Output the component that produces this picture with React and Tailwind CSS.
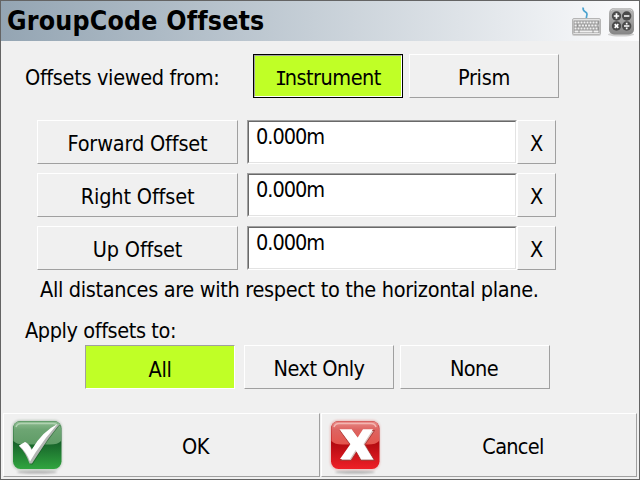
const FONT =
  "font-['DejaVu_Sans_Condensed','DejaVu_Sans',sans-serif] [font-stretch:condensed]";

const offsets = [
  { label: "Forward Offset", value: "0.000m" },
  { label: "Right Offset", value: "0.000m" },
  { label: "Up Offset", value: "0.000m" },
];

function Button({ active, focused, className = "", children }) {
  const edges = active
    ? "bg-[#c0ff26] border-t-[#a0a0a0] border-l-[#a0a0a0] border-b-white border-r-white"
    : "bg-[#f0f0f0] border-t-white border-l-white border-b-[#a0a0a0] border-r-[#a0a0a0]";

  const button = (
    <button
      type="button"
      className={`flex items-center justify-center border whitespace-nowrap ${edges} ${
        focused ? "size-full pt-1" : className
      }`}
    >
      {children}
    </button>
  );

  if (!focused) return button;
  return <div className={`border border-black ${className}`}>{button}</div>;
}

function KeyboardIcon() {
  return (
    <svg className="w-8 h-9" viewBox="0 0 32 36">
      <path
        d="M12.200 4.500c-1 5 3.500 3.500 3.800 6.500 0 2 -1 2.500 -.5 5"
        fill="none"
        stroke="#4ba3cf"
        strokeWidth="1.700"
      />
      <rect x="1" y="18" width="29" height="15" rx="2" fill="#cfcfcf" />
      <rect x="1.500" y="15.500" width="28" height="16" rx="1.500" fill="#e3e3e3" stroke="#b5b5b5" />
      <rect x="2.500" y="17.500" width="26" height="12.500" fill="#959595" />
      <g stroke="#f0f0f0" strokeWidth="2">
        <path d="M3.500 19.500h24" strokeDasharray="2 1" />
        <path d="M3.500 22.500h3m1 0h20" strokeDasharray="2.200 1" />
        <path d="M3.500 25.500h24" strokeDasharray="2 1" />
        <path d="M3.500 28.400h4m1 0h13m1 0h5" />
      </g>
    </svg>
  );
}

function CalculatorIcon() {
  return (
    <svg className="w-8 h-9" viewBox="0 0 32 36">
      <defs>
        <linearGradient id="calcBody" x2="0" y2="1">
          <stop offset="0" stopColor="#b5b5b5" />
          <stop offset="0.45" stopColor="#a2a2a2" />
          <stop offset="1" stopColor="#858585" />
        </linearGradient>
      </defs>
      <ellipse cx="16" cy="31.500" rx="13" ry="2" fill="#cfcfcf" />
      <rect x="4" y="5" width="25" height="26.500" rx="5" fill="url(#calcBody)" />
      <path d="M6 8q1-2 4-2h13q3 0 4 2" fill="none" stroke="#d0d0d0" />
      <g fill="#4b4b4b">
        <circle cx="11.500" cy="13" r="4.700" />
        <circle cx="21.700" cy="13" r="4.700" />
        <circle cx="11.500" cy="23" r="4.700" />
        <circle cx="21.700" cy="23" r="4.700" />
      </g>
      <g stroke="#fff" strokeWidth="1.700">
        <path d="M8.800 13h5.400M11.500 10.300v5.400M19 13h5.400M19 23h5.400M9.700 21.200l3.600 3.600m0-3.600l-3.600 3.600" />
        <path d="M21.700 19.800v1.700m0 3.100v1.700" />
      </g>
    </svg>
  );
}

function StatusIcon({ kind }) {
  const ok = kind === "ok";

  return (
    <svg className="w-[54px] h-[60px] shrink-0" viewBox="0 0 54 60">
      <defs>
        <linearGradient id={`${kind}Body`} x2="0" y2="1">
          <stop offset="0" stopColor={ok ? "#3b8449" : "#c83a3c"} />
          <stop offset="0.45" stopColor={ok ? "#17632a" : "#b20a10"} />
          <stop offset="1" stopColor={ok ? "#30a53f" : "#ee2027"} />
        </linearGradient>
        <linearGradient id={`${kind}Gloss`} x2="0" y2="1">
          <stop offset="0" stopColor={ok ? "#8ebb90" : "#e88a86"} />
          <stop offset="0.35" stopColor={ok ? "#6da573" : "#dd6562"} />
          <stop offset="1" stopColor={ok ? "#5f9c66" : "#e5544c"} />
        </linearGradient>
        <filter id={`${kind}Blur`} x="-20%" y="-40%" width="140%" height="180%">
          <feGaussianBlur stdDeviation="1.300" />
        </filter>
      </defs>
      <ellipse cx="27" cy="57" rx="20" ry="1.800" fill="#b5b5b5" filter={`url(#${kind}Blur)`} />
      <rect
        x="2"
        y="5"
        width="50"
        height="50"
        rx="8"
        fill={ok ? "#bfcabf" : "#e9bdbb"}
        filter={`url(#${kind}Blur)`}
      />
      <rect x="3" y="6" width="48.500" height="48" rx="7.500" fill={`url(#${kind}Body)`} />
      <path
        d="M3.500 13.500q0-7 7-7h33.500q7 0 7 7v12.500q-3 3.500-11 3.500H14.500q-8 0-11-3.500z"
        fill={`url(#${kind}Gloss)`}
      />
      <path
        d="M6 12q1-3.500 5-3.500h32q4 0 5 3.500"
        fill="none"
        stroke={ok ? "#b0d2b1" : "#f3b5b1"}
        strokeWidth="1.500"
      />
      {ok ? (
        <>
          <path
            d="M9 31.500l6.500-4q4 2 6.500 7Q33 16 50.500 9.500 38 24 28 41l-5.500 8.500h-2Q17 39 9 31.500z"
            fill="#174f22"
            opacity=".55"
          />
          <path
            d="M9 31l6.500-4q4 2 6.500 7.500Q33 16.500 50 8.500 38 23 27.500 40L22 48.500h-2.500Q16 38 9 31z"
            fill="#b3b6b3"
          />
          <path
            d="M9 30.500l6-3.500q4 2 6.500 8Q32 16.500 47.500 9 35 23 25.500 37.500L20 46.500Q16.500 37 9 30.500z"
            fill="#fff"
          />
        </>
      ) : (
        <>
          <path
            d="M12 15.500h12.500l5.500 8 5.500-8h11L37 29.500l9.500 16H33L28.500 37l-5.500 8.500H12.500L22.500 30z"
            fill="#d9bfbd"
            stroke="#a42826"
            strokeWidth="0.800"
          />
          <path
            d="M11.500 14.300H23.700L29.700 22.500 35 14.300H45L35.500 29 45 44H33L27.700 35 22 44H12L22.500 29z"
            fill="#fff"
          />
        </>
      )}
    </svg>
  );
}

export default function App() {
  return (
    <div
      className={`w-[640px] h-[480px] flex flex-col border border-[#646464] bg-[#f0f0f0] text-black text-[21.5px] leading-7 tracking-[-0.33px] ${FONT}`}
    >
      <header className="h-10 shrink-0 flex items-center justify-between pl-1.5 bg-linear-to-r from-[#94a5b3] to-[#fcfcfd]">
        <h1 className="text-[26.5px] font-bold leading-8 whitespace-nowrap tracking-[0.2px] pb-px">
          GroupCode Offsets
        </h1>
        <div className="flex gap-0.5 pr-0.5">
          <KeyboardIcon />
          <CalculatorIcon />
        </div>
      </header>

      <main className="flex-1 flex flex-col pt-[13px]">
        <div className="flex items-center h-11 pl-6">
          <span className="w-[228px] pt-1 whitespace-nowrap">Offsets viewed from:</span>
          <Button active focused className="w-[150px] h-11">
            <span className="flex items-baseline tracking-[-0.5px]">
              {/* slab-serif capital I */}
              <span className="font-['DejaVu_Sans_Mono',monospace] text-[20px] tracking-[-2.5px]">
                I
              </span>
              <span>nstrument</span>
            </span>
          </Button>
          <Button className="w-[150px] h-11 ml-1.5 pt-1">Prism</Button>
        </div>

        <div className="flex flex-col gap-[9px] mt-[22px] pl-9">
          {offsets.map(({ label, value }) => (
            <div key={label} className="flex h-11">
              <Button className="w-[201px] h-11 pt-1">
                <span className="tracking-[-0.15px]">{label}</span>
              </Button>
              <div className="w-[270px] ml-[9px] border border-t-[#a0a0a0] border-l-[#a0a0a0] border-b-white border-r-white">
                <input
                  defaultValue={value}
                  className="block size-full bg-white border border-t-[#696969] border-l-[#696969] border-b-[#e3e3e3] border-r-[#e3e3e3] pl-[7px] pb-3 outline-none tracking-[-1px]"
                />
              </div>
              <Button className="w-[39px] h-11 pt-1">X</Button>
            </div>
          ))}
        </div>

        <p className="mt-1.5 pl-[39px] whitespace-nowrap">
          All distances are with respect to the horizontal plane.
        </p>
        <p className="mt-[13px] pl-6 whitespace-nowrap tracking-[-0.4px]">Apply offsets to:</p>

        <div className="flex pl-[84px]">
          <Button active className="w-[150px] h-11 pt-1.5">
            All
          </Button>
          <Button className="w-[150px] h-11 ml-[9px] pt-1">
            <span className="tracking-[-0.5px]">Next Only</span>
          </Button>
          <Button className="w-[150px] h-11 ml-1.5 pt-1">
            <span className="tracking-[-0.6px] -ml-0.5">None</span>
          </Button>
        </div>
      </main>

      <footer className="flex shrink-0 h-16 mb-0.5 pl-0.5 gap-px">
        <button
          type="button"
          className="flex items-center w-[317px] h-16 border border-t-white border-l-white border-b-[#a0a0a0] border-r-[#a0a0a0] pl-1.5"
        >
          <StatusIcon kind="ok" />
          <span className="flex-1 pt-1 pl-2">OK</span>
        </button>
        <button
          type="button"
          className="flex items-center w-[316px] h-16 border border-t-white border-l-white border-b-[#a0a0a0] border-r-[#a0a0a0] pl-1.5"
        >
          <StatusIcon kind="cancel" />
          <span className="flex-1 pt-1 pl-2 tracking-[-0.7px]">Cancel</span>
        </button>
      </footer>
    </div>
  );
}
